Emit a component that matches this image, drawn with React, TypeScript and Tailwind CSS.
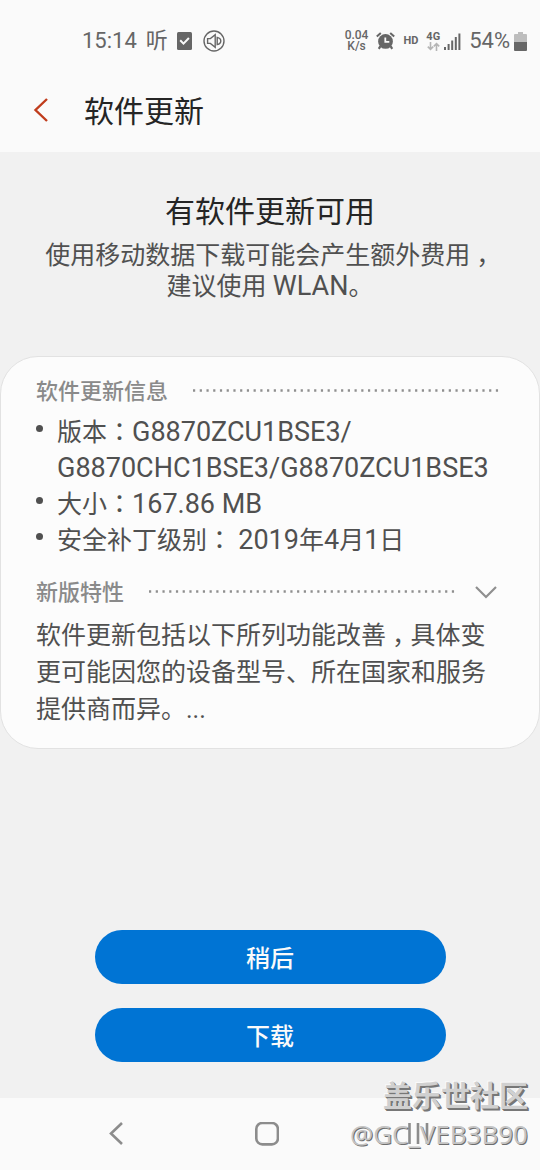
import React from "react";

// Full-width colon, centred in its cell
function Colon() {
  return (
    <span className="font-['Noto_Sans_CJK_TC',sans-serif] leading-none">
      ：
    </span>
  );
}

// Full-width comma, half-width glyph with even space on both sides
function Comma() {
  return <span className="px-[6px] [font-feature-settings:'halt']">，</span>;
}

// Latin runs are set a little larger than the Chinese text
function Latin({ children }: { children: React.ReactNode }) {
  return <span className="text-[27px] leading-none">{children}</span>;
}

function DottedLine() {
  return (
    <svg className="mb-[3px] h-[3px] min-w-0 flex-1" aria-hidden="true">
      <line
        x1="1"
        y1="1.5"
        x2="100%"
        y2="1.5"
        stroke="#8f8f8f"
        strokeWidth="2.6"
        strokeDasharray="2.2 4.53"
      />
    </svg>
  );
}

function StatusBar() {
  return (
    <div className="flex h-[82px] items-center justify-between pl-[82px] pr-[13px] text-[#666666]">
      <div className="flex items-center gap-[9px]">
        <span className="text-[22px] leading-6">15:14</span>
        <span className="text-[22px] leading-6">听</span>
        <svg viewBox="0 0 15 18" className="h-[18px] w-[15px]">
          <rect width="15" height="18" rx="1.5" fill="#666666" />
          <path
            d="M3.2 8.2l3.3 3.4 5.4-5.6"
            fill="none"
            stroke="#fafafa"
            strokeWidth="2"
          />
        </svg>
        <svg
          viewBox="0 0 22 22"
          className="ml-[2px] h-[22px] w-[22px]"
          fill="none"
          stroke="#666666"
          strokeWidth="1.4"
        >
          <circle cx="11" cy="11" r="10" />
          <path d="M4.6 8.6h2.8l4.8-3.8v12.4l-4.8-3.8H4.6z" />
          <path d="M14.2 7.4c2.6.6 3.6 2 3.6 3.6s-1 3-3.6 3.6z" />
        </svg>
      </div>

      <div className="flex items-center gap-2">
        <p className="text-center text-[12px] font-medium leading-[11px]">
          0.04
          <br />
          K/s
        </p>
        {/* Alarm */}
        <svg viewBox="0 0 19 18" className="h-[18px] w-[19px]">
          <circle cx="9.5" cy="9.4" r="7.4" fill="#666666" />
          <path
            d="M4.4 14.2l-1.6 2.6M14.6 14.2l1.6 2.6"
            stroke="#666666"
            strokeWidth="2.2"
          />
          <path
            d="M.8 4.6L4.8 1M18.2 4.6L14.2 1"
            stroke="#666666"
            strokeWidth="2"
          />
          <path
            d="M9.3 5.4v4.4h4"
            fill="none"
            stroke="#fafafa"
            strokeWidth="1.8"
          />
        </svg>
        <span className="text-[11px] font-bold leading-4">HD</span>
        <div className="flex items-center gap-1">
          <div className="flex flex-col items-center">
            <span className="text-[11px] font-bold leading-[11px]">4G</span>
            <svg
              viewBox="0 0 13 9"
              className="h-[9px] w-[13px]"
              fill="none"
              stroke="#b5b5b5"
              strokeWidth="1.6"
            >
              <path d="M3.5 0v7M.8 4.6l2.7 2.8 2.7-2.8M9.5 9V2M6.8 4.4l2.7-2.8 2.7 2.8" />
            </svg>
          </div>
          <svg viewBox="0 0 17 17" className="h-[17px] w-[17px]" fill="#666666">
            <rect x="0" y="14" width="2" height="3" />
            <rect x="3.6" y="11" width="2" height="6" />
            <rect x="7.2" y="7.5" width="2" height="9.5" />
            <rect x="10.8" y="4" width="2" height="13" />
            <rect x="14.4" y="0.5" width="2" height="16.5" />
          </svg>
        </div>
        <div className="flex items-center gap-1">
          <span className="text-[22px] leading-6">54%</span>
          <svg viewBox="0 0 13 19" className="h-[19px] w-[13px]">
            <path d="M4 0h5v2h3q1 0 1 1v7H0V3q0-1 1-1h3z" fill="#bdbdbd" />
            <path d="M0 10h13v8q0 1-1 1H1q-1 0-1-1z" fill="#666666" />
          </svg>
        </div>
      </div>
    </div>
  );
}

function Bullet({ children }: { children: React.ReactNode }) {
  return (
    <li className="flex gap-[14px]">
      <span className="mt-[10px] h-[7px] w-[7px] shrink-0 rounded-full bg-[#505050]" />
      <span>{children}</span>
    </li>
  );
}

export default function App() {
  return (
    <div className="relative flex min-h-screen flex-col bg-[#f1f1f1] font-[Roboto,'Noto_Sans_CJK_SC',sans-serif] text-[#505050]">
      {/* Top bar */}
      <header className="bg-[#fafafa]">
        <StatusBar />
        <div className="flex h-[70px] items-start pl-8">
          <button type="button" aria-label="返回" className="mt-4 h-6 w-5">
            <svg viewBox="0 0 20 24" className="h-6 w-5">
              <path
                d="M15 1L3.5 12 15 23"
                fill="none"
                stroke="#c03c1c"
                strokeWidth="2.4"
              />
            </svg>
          </button>
          <h1 className="ml-8 mt-[10px] text-[30px] leading-10 text-[#252525]">
            软件更新
          </h1>
        </div>
      </header>

      <main className="flex flex-1 flex-col">
        {/* Intro */}
        <section className="px-9 pt-10 text-center">
          <h2 className="text-[30px] leading-10 text-[#252525]">
            有软件更新可用
          </h2>
          <p className="mt-2 text-[25px] leading-[31px]">
            使用移动数据下载可能会产生额外费用
            <Comma />
            <br />
            建议使用 <Latin>WLAN</Latin>。
          </p>
        </section>

        {/* Update details */}
        <section className="mt-[54px] rounded-[38px] border border-[#e2e2e2] bg-[#fcfcfc] pb-5 pl-[35px] pr-[38px] pt-[19px] text-[25px]">
          <div className="flex items-center gap-6">
            <h3 className="text-[22px] font-medium leading-8 text-[#8a8a8a]">
              软件更新信息
            </h3>
            <DottedLine />
          </div>
          <ul className="mt-[7px] leading-9">
            <Bullet>
              版本
              <Colon />
              <Latin>G8870ZCU1BSE3/</Latin>
              <br />
              <Latin>G8870CHC1BSE3/G8870ZCU1BSE3</Latin>
            </Bullet>
            <Bullet>
              大小
              <Colon />
              <Latin>167.86 MB</Latin>
            </Bullet>
            <Bullet>
              安全补丁级别
              <Colon /> <Latin>2019</Latin>年<Latin>4</Latin>月<Latin>1</Latin>日
            </Bullet>
          </ul>

          <div className="mt-[18px] flex items-center gap-6">
            <h3 className="text-[22px] font-medium leading-8 text-[#8a8a8a]">
              新版特性
            </h3>
            <DottedLine />
            <button
              type="button"
              aria-label="展开"
              className="-ml-2 mr-[3px] h-5 w-6"
            >
              <svg viewBox="0 0 24 20" className="h-5 w-6">
                <path
                  d="M2 4l10 10L22 4"
                  fill="none"
                  stroke="#8f8f8f"
                  strokeWidth="2.2"
                />
              </svg>
            </button>
          </div>
          <p className="mt-2 leading-[37px]">
            软件更新包括以下所列功能改善
            <Comma />
            具体变
            <wbr />
            更可能因您的设备型号、所在国家和服务提供商而异。...
          </p>
        </section>

        {/* Actions */}
        <div className="mt-auto flex flex-col items-center gap-6 pb-9 pt-8">
          <button
            type="button"
            className="h-[54px] w-[65%] rounded-full bg-[#0074d4] pt-1 text-[24px] font-medium text-[#fafafa]"
          >
            稍后
          </button>
          <button
            type="button"
            className="h-[54px] w-[65%] rounded-full bg-[#0074d4] pt-1 text-[24px] font-medium text-[#fafafa]"
          >
            下载
          </button>
        </div>
      </main>

      {/* Navigation bar */}
      <nav className="flex h-[72px] items-center justify-center gap-[126px] bg-[#fafafa] pr-[6px]">
        <button type="button" aria-label="后退" className="h-6 w-6">
          <svg viewBox="0 0 24 24" className="h-6 w-6">
            <path
              d="M17 1L6 11.5 17 22"
              fill="none"
              stroke="#8c8c8c"
              strokeWidth="2.6"
            />
          </svg>
        </button>
        <button type="button" aria-label="主屏幕" className="h-6 w-6">
          <svg viewBox="0 0 24 24" className="h-6 w-6">
            <rect
              x="1.3"
              y="1"
              width="21.6"
              height="21.4"
              rx="6"
              fill="none"
              stroke="#8c8c8c"
              strokeWidth="2.6"
            />
          </svg>
        </button>
        <button type="button" aria-label="最近" className="h-6 w-6">
          <svg viewBox="0 0 24 24" className="h-6 w-6">
            <path
              d="M4.5 1v21M13 1v21M22 1v21"
              stroke="#8c8c8c"
              strokeWidth="2.6"
            />
          </svg>
        </button>
      </nav>

      {/* Community stamp over the corner */}
      <div className="pointer-events-none absolute bottom-[18px] right-3 text-right font-['Open_Sans','Noto_Sans_CJK_SC',sans-serif]">
        <div className="text-[29px] font-bold leading-10 text-[#d0d0d0] [text-shadow:1px_1px_0_#777777,2px_2px_0_#777777,-1px_-1px_0_#fafafa]">
          盖乐世社区
        </div>
        <div className="text-[26px] leading-9 text-[#c4c4c4] [text-shadow:1px_1px_0_#6e6e6e]">
          @GC_VEB3B90
        </div>
      </div>
    </div>
  );
}
